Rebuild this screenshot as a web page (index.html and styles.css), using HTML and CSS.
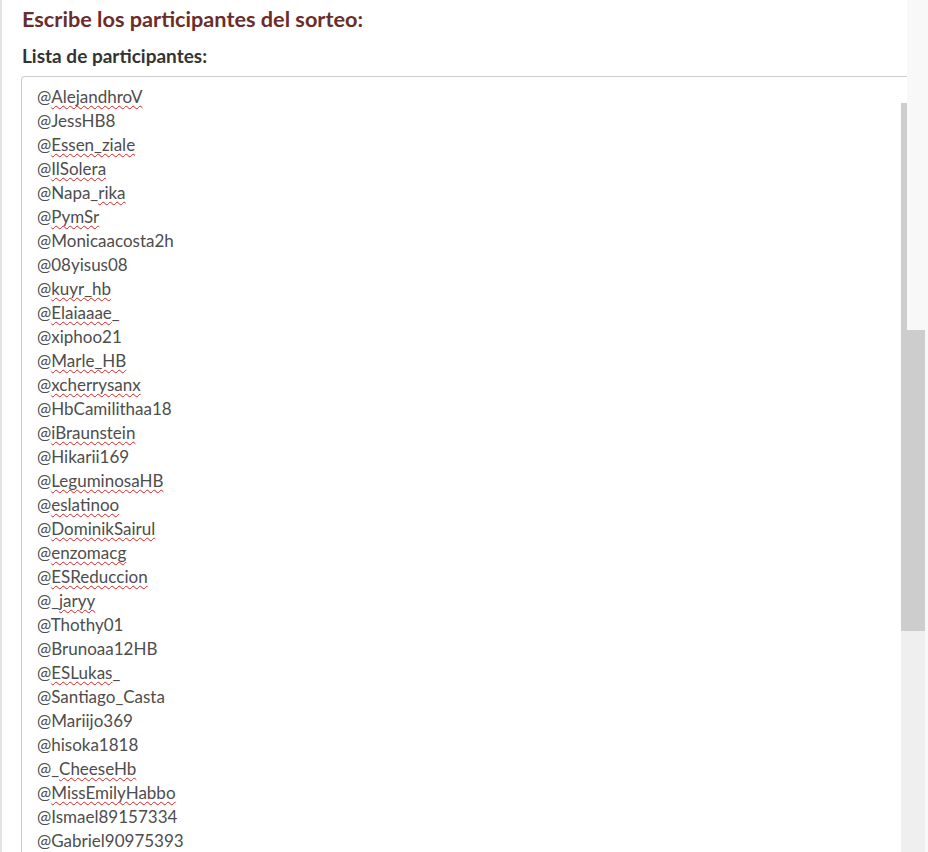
FILE: index.html
```html
<!DOCTYPE html>
<html lang="es">
<head>
    <meta charset="UTF-8">
    <meta name="viewport" content="width=device-width, initial-scale=1.0">
    <title>Sorteo</title>
    <link rel="stylesheet" href="styles.css">
</head>
<body>
    <div class="page">
        <main class="content">
            <h2 class="title">Escribe los participantes del sorteo:</h2>
            <label class="label" for="participants">Lista de participantes:</label>
            <div class="box" id="participants" contenteditable="true" spellcheck="false">
                <div class="lines">
                    <div>@<span class="typo">AlejandhroV</span></div>
                    <div>@JessHB8</div>
                    <div>@<span class="typo">Essen_ziale</span></div>
                    <div>@<span class="typo">IlSolera</span></div>
                    <div>@Napa_<span class="typo">rika</span></div>
                    <div>@<span class="typo">PymSr</span></div>
                    <div>@Monicaacosta2h</div>
                    <div>@08yisus08</div>
                    <div>@<span class="typo">kuyr_hb</span></div>
                    <div>@<span class="typo">Elaiaaae</span>_</div>
                    <div>@xiphoo21</div>
                    <div>@<span class="typo">Marle_HB</span></div>
                    <div>@<span class="typo">xcherrysanx</span></div>
                    <div>@HbCamilithaa18</div>
                    <div>@<span class="typo">iBraunstein</span></div>
                    <div>@Hikarii169</div>
                    <div>@<span class="typo">LeguminosaHB</span></div>
                    <div>@<span class="typo">eslatinoo</span></div>
                    <div>@<span class="typo">DominikSairul</span></div>
                    <div>@<span class="typo">enzomacg</span></div>
                    <div>@<span class="typo">ESReduccion</span></div>
                    <div>@_<span class="typo">jaryy</span></div>
                    <div>@Thothy01</div>
                    <div>@Brunoaa12HB</div>
                    <div>@<span class="typo">ESLukas</span>_</div>
                    <div>@Santiago_Casta</div>
                    <div>@Mariijo369</div>
                    <div>@hisoka1818</div>
                    <div>@_<span class="typo">CheeseHb</span></div>
                    <div>@<span class="typo">MissEmilyHabbo</span></div>
                    <div>@Ismael89157334</div>
                    <div>@Gabriel90975393</div>
                </div>
                <div class="box-bar"></div>
            </div>
        </main>
        <div class="page-bar">
            <div class="page-thumb"></div>
            <div class="page-track"></div>
        </div>
    </div>
</body>
</html>
```

FILE: styles.css
```css
/* Base */
body {
    margin: 0;
    background-color: #ffffff;
    font-family: Lato, "Open Sans", sans-serif;
    color: #333333;
}

.page {
    display: flex;
    height: 852px;
    overflow: hidden;
}

.content {
    flex: 1;
    display: flex;
    flex-direction: column;
    border-left: 2px solid #e4e4e4;
    padding: 0 0 0 19px;
    min-width: 0;
}

.title {
    margin: 5px 0 0 1px;
    font-size: 21.7px;
    font-weight: 700;
    line-height: 28px;
    color: #6b2d2a;
}

.label {
    display: block;
    margin: 11px 0 0 1px;
    font-size: 19px;
    font-weight: 700;
    line-height: 24px;
    color: #333333;
}

.box {
    display: flex;
    margin-top: 8px;
    border: 1px solid #cccccc;
    border-right: none;
    border-radius: 4px 0 0 0;
    flex: 1;
    outline: none;
}

.lines {
    flex: 1;
    padding: 8px 0 0 15px;
    font-size: 17px;
    line-height: 24px;
    color: #4d4d4d;
}

.typo {
    text-decoration: underline wavy #d42020;
    text-decoration-thickness: 1px;
    text-underline-offset: 2px;
    text-decoration-skip-ink: none;
}

.box-bar {
    width: 6px;
    margin-top: 26px;
    background: linear-gradient(#cdcdcd 0, #cdcdcd 528px, #efefef 528px);
}

.page-bar {
    width: 21px;
    display: flex;
    flex-direction: column;
    background-color: #f8f8f8;
}

.page-thumb {
    width: 18px;
    height: 301px;
    margin-top: 330px;
    background-color: #cdcdcd;
}

.page-track {
    width: 18px;
    flex: 1;
    background-color: #efefef;
}
```
